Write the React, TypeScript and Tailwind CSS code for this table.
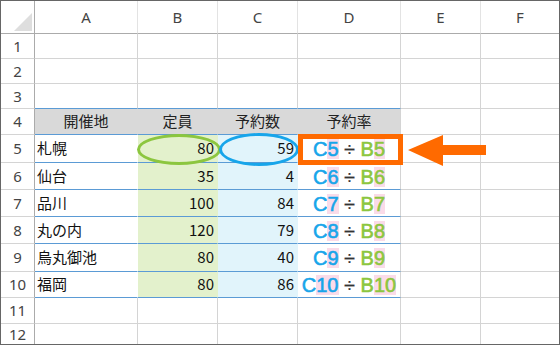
const cols = ["A", "B", "C", "D", "E", "F"];

const colWidths = "grid-cols-[34px_103px_80px_80px_103px_80px_78px]";
const rowHeights =
  "grid-rows-[33px_25px_25px_25px_26px_28px_27px_27px_27px_28px_26px_26px_20px]";

const data = [
  { place: "札幌", cap: 80, res: 59, n: 5 },
  { place: "仙台", cap: 35, res: 4, n: 6 },
  { place: "品川", cap: 100, res: 84, n: 7 },
  { place: "丸の内", cap: 120, res: 79, n: 8 },
  { place: "烏丸御池", cap: 80, res: 40, n: 9 },
  { place: "福岡", cap: 80, res: 86, n: 10 },
];

const jp = "font-['Noto_Sans_CJK_JP','Noto_Sans',sans-serif]";
const head = "font-['Noto_Sans','Noto_Sans_CJK_JP',sans-serif] text-[15px] text-[#444]";

function RowHead({ n, last }: { n: number; last?: boolean }) {
  return (
    <div
      className={`flex items-center justify-center border-r border-[#ababab] ${
        last ? "" : "border-b border-b-[#d4d4d4]"
      } ${head}`}
    >
      {n}
    </div>
  );
}

function Blank({ last, lastRow, blueBottom }: { last?: boolean; lastRow?: boolean; blueBottom?: boolean }) {
  return (
    <div
      className={`${last ? "" : "border-r border-r-[#d4d4d4]"} ${
        lastRow ? "" : blueBottom ? "border-b border-b-[#5b9bd5]" : "border-b border-b-[#d4d4d4]"
      }`}
    />
  );
}

function Formula({ n }: { n: number }) {
  return (
    <span className="whitespace-nowrap font-['Liberation_Sans',sans-serif] text-[20px] leading-[20px] [-webkit-text-stroke:0.6px_currentColor]">
      <span className="text-[#17a5ea]">
        C<span className="inline-block bg-[#fadbe9] leading-[20px]">{n}</span>
      </span>
      <span className="text-[#333] [-webkit-text-stroke:0.2px_currentColor]"> ÷ </span>
      <span className="text-[#8cc63f]">
        B<span className="inline-block bg-[#fadbe9] leading-[20px]">{n}</span>
      </span>
    </span>
  );
}

export default function App() {
  return (
    <div className="relative h-[345px] w-[560px] overflow-hidden border border-[#666] bg-white">
      <div className={`grid ${colWidths} ${rowHeights} h-[343px] w-[558px]`}>
        {/* corner */}
        <div className="flex items-end justify-end border-r border-b border-[#ababab] pr-[2px] pb-[2px]">
          <svg width="18" height="18" viewBox="0 0 18 18">
            <polygon points="18,0 18,18 0,18" fill="#dedede" />
          </svg>
        </div>
        {cols.map((c, i) => (
          <div
            key={c}
            className={`flex items-center justify-center border-b border-b-[#ababab] ${
              i < 5 ? "border-r border-r-[#e3e3e3]" : ""
            } ${head}`}
          >
            {c}
          </div>
        ))}

        {/* rows 1-3 */}
        {[1, 2, 3].map((r) => (
          <div key={r} className="contents">
            <RowHead n={r} />
            {cols.map((c, i) => (
              <Blank key={c} last={i === 5} blueBottom={r === 3 && i < 4} />
            ))}
          </div>
        ))}

        {/* row 4: table header */}
        <RowHead n={4} />
        {["開催地", "定員", "予約数", "予約率"].map((t, i) => (
          <div
            key={t}
            className={`flex items-center justify-center border-r border-b border-b-[#5b9bd5] bg-[#d9d9d9] pb-[1px] text-[15px] text-[#222] ${jp} ${
              i < 3 ? "border-r-[#d9d9d9]" : "border-r-[#d4d4d4]"
            }`}
          >
            {t}
          </div>
        ))}
        <Blank />
        <Blank last />

        {/* rows 5-10 */}
        {data.map((d) => (
          <div key={d.n} className="contents">
            <RowHead n={d.n} />
            <div className={`flex items-center border-r border-r-white border-b border-b-[#5b9bd5] pl-[2px] text-[15px] text-[#111] ${jp}`}>
              {d.place}
            </div>
            <div className={`flex items-center justify-end border-r border-r-[#e3f1cc] border-b border-b-[#5b9bd5] bg-[#e3f1cc] pr-[3px] text-[15px] text-[#111] ${jp}`}>
              {d.cap}
            </div>
            <div className={`flex items-center justify-end border-r border-r-[#e1f4fb] border-b border-b-[#5b9bd5] bg-[#e1f4fb] pr-[3px] text-[15px] text-[#111] ${jp}`}>
              {d.res}
            </div>
            <div className="flex items-center justify-center border-r border-r-[#d4d4d4] border-b border-b-[#5b9bd5] pt-[1px]">
              <Formula n={d.n} />
            </div>
            <Blank />
            <Blank last />
          </div>
        ))}

        {/* rows 11-12 */}
        {[11, 12].map((r) => (
          <div key={r} className="contents">
            <RowHead n={r} last={r === 12} />
            {cols.map((c, i) => (
              <Blank key={c} last={i === 5} lastRow={r === 12} />
            ))}
          </div>
        ))}
      </div>

      {/* annotations */}
      <div className="absolute left-[136px] top-[133px] h-[31px] w-[84px] rounded-[50%] border-[3px] border-[#8cc63f]" />
      <div className="absolute left-[218px] top-[132px] h-[33px] w-[80px] rounded-[50%] border-[3px] border-[#17a5ea]" />
      <div className="absolute left-[297px] top-[133px] h-[31px] w-[105px] border-[5px] border-[#ff6a00]" />
      <svg className="absolute left-[405px] top-[132px]" width="82" height="36" viewBox="0 0 82 36">
        <polygon points="2,17 37,2 37,12 80,12 80,22 37,22 37,33" fill="#ff6a00" />
      </svg>
    </div>
  );
}
